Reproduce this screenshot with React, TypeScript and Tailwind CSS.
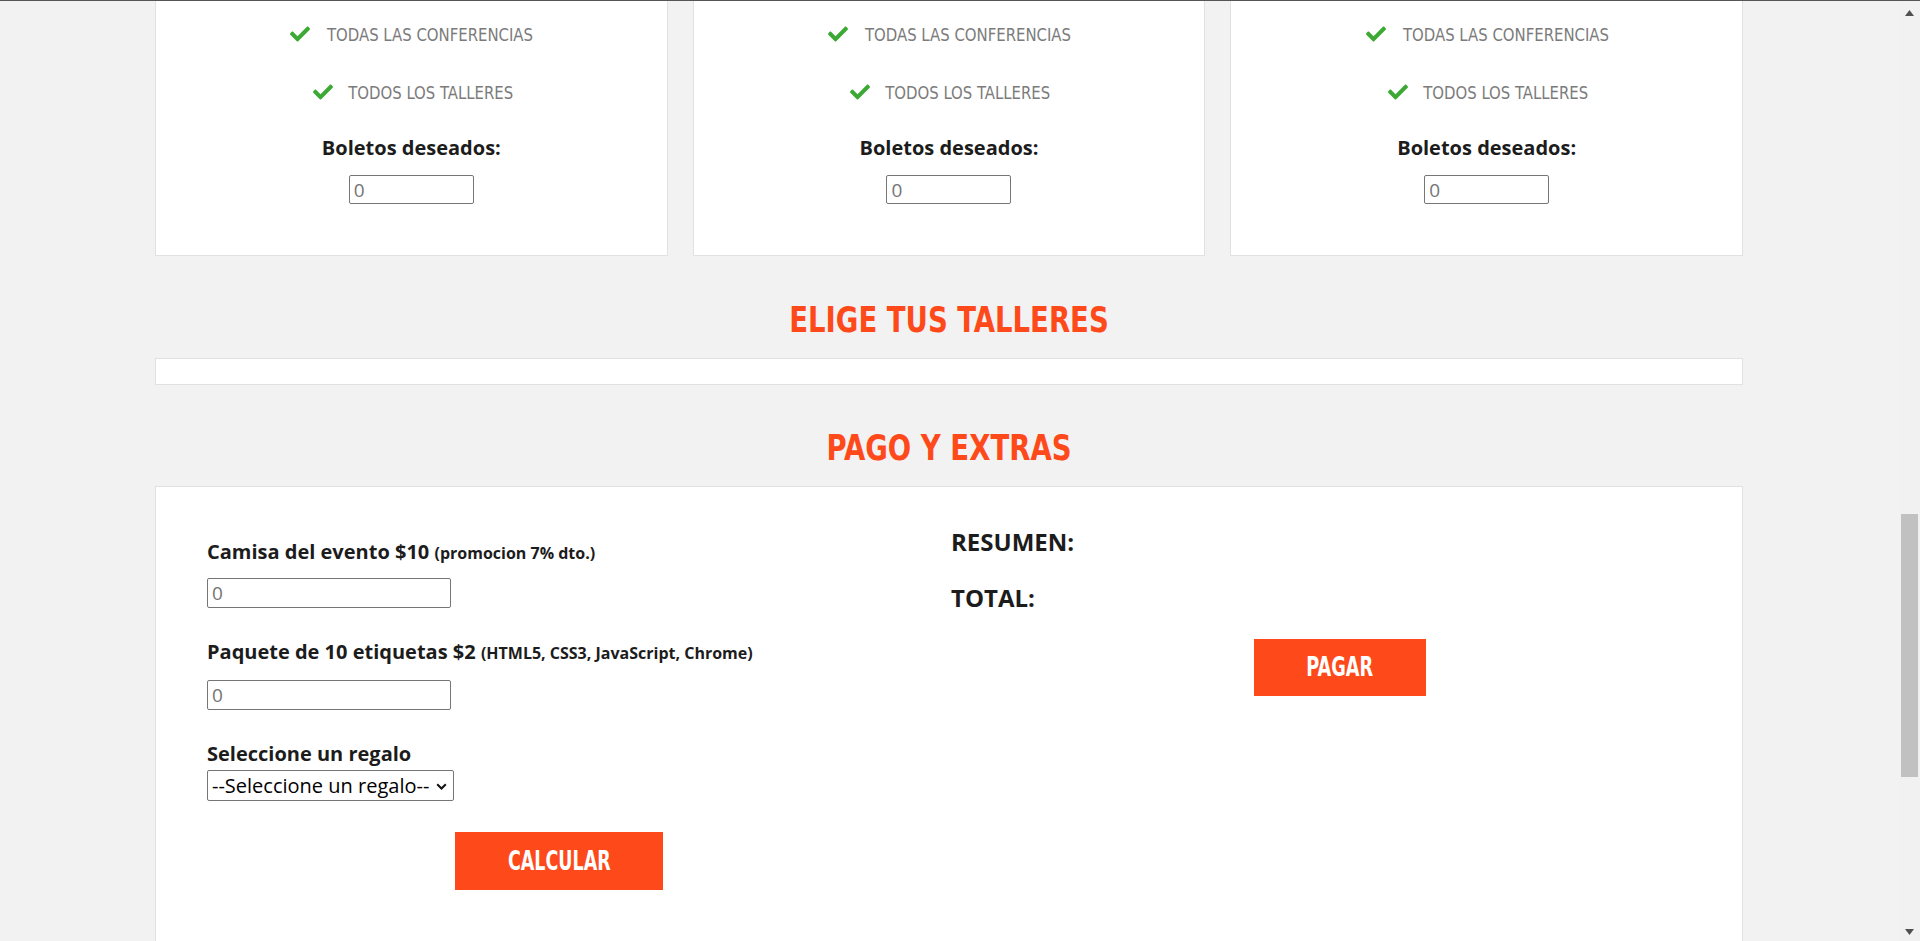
import React from "react";
import { FaCheck } from "react-icons/fa";

const narrow = { fontFamily: '"Liberation Sans Narrow", "DejaVu Sans Condensed", "Liberation Sans", sans-serif' };
const open = { fontFamily: '"Open Sans", "Liberation Sans", sans-serif' };

function Card() {
  return (
    <div className="bg-white border-x border-b border-[#e1e1e1] pt-[4px] pb-[51px] flex flex-col items-center">
      <div className="h-[58px] flex items-center justify-center gap-[6px] pl-[8px]">
        <FaCheck className="text-[#3da935] w-[24px] h-[20px]" />
        <span className="inline-block text-[18px] text-[#7b7b7b] scale-x-[0.92]" style={narrow}>TODAS LAS CONFERENCIAS</span>
      </div>
      <div className="h-[58px] flex items-center justify-center gap-[6px] pl-[8px]">
        <FaCheck className="text-[#3da935] w-[24px] h-[20px]" />
        <span className="inline-block text-[18px] text-[#7b7b7b] scale-x-[0.92]" style={narrow}>TODOS LOS TALLERES</span>
      </div>
      <div className="h-[30px] leading-[30px] mt-[12px] text-[20px] font-bold text-[#1c1c1c]" style={open}>Boletos deseados:</div>
      <input
        type="text"
        placeholder="0"
        className="mt-[12px] w-[125px] h-[29px] border border-[#767676] rounded-[2px] px-[4px] text-[19px] text-[#757575] placeholder:text-[#757575] bg-white"
        style={open}
      />
    </div>
  );
}

function Heading({ children }: { children: React.ReactNode }) {
  return (
    <h2 className="h-[40px] leading-[40px] text-center text-[#fe4a1b] text-[36px] font-bold" style={narrow}>
      <span className="inline-block scale-x-[0.85]">{children}</span>
    </h2>
  );
}

export default function App() {
  return (
    <div className="w-[1920px] h-[941px] overflow-hidden bg-[#f2f2f2] border-t border-[#555] flex">
      <div className="w-[1899px] h-full">
        <div className="w-[1588px] ml-[155px]">
          <div className="grid grid-cols-3 gap-[25px]">
            <Card />
            <Card />
            <Card />
          </div>

          <div className="mt-[44px]">
            <Heading>ELIGE TUS TALLERES</Heading>
          </div>
          <div className="mt-[18px] h-[27px] bg-white border border-[#e1e1e1]"></div>

          <div className="mt-[43px]">
            <Heading>PAGO Y EXTRAS</Heading>
          </div>

          <div className="mt-[18px] h-[600px] bg-white border border-[#e1e1e1] pl-[51px] grid grid-cols-[744px_1fr]" style={open}>
            <div className="pt-[50px] flex flex-col items-start">
              <div className="h-[30px] leading-[30px] text-[20px] font-bold text-[#1c1c1c]">
                Camisa del evento $10 <span className="text-[16px]">(promocion 7% dto.)</span>
              </div>
              <input
                type="text"
                placeholder="0"
                className="mt-[11px] w-[244px] h-[30px] border border-[#767676] rounded-[2px] px-[4px] text-[19px] text-[#757575] placeholder:text-[#757575] bg-white"
              />
              <div className="mt-[29px] h-[30px] leading-[30px] text-[20px] font-bold text-[#1c1c1c]">
                Paquete de 10 etiquetas $2 <span className="text-[16px]">(HTML5, CSS3, JavaScript, Chrome)</span>
              </div>
              <input
                type="text"
                placeholder="0"
                className="mt-[13px] w-[244px] h-[30px] border border-[#767676] rounded-[2px] px-[4px] text-[19px] text-[#757575] placeholder:text-[#757575] bg-white"
              />
              <div className="mt-[29px] h-[30px] leading-[30px] text-[20px] font-bold text-[#1c1c1c]">Seleccione un regalo</div>
              <div className="relative mt-[1px] w-[247px] h-[31px]">
                <select className="appearance-none w-full h-full border border-[#767676] rounded-[2px] pl-[4px] text-[20px] text-black bg-white leading-[29px]">
                  <option>--Seleccione un regalo--</option>
                </select>
                <svg className="absolute right-[7px] top-[13px] pointer-events-none" width="11" height="7" viewBox="0 0 11 7">
                  <path d="M1.2 1.2 L5.5 5.5 L9.8 1.2" fill="none" stroke="#111" strokeWidth="2" />
                </svg>
              </div>
              <button className="mt-[31px] ml-[248px] w-[208px] h-[58px] bg-[#fe4a1b] text-white text-[27px] font-bold" style={narrow}>
                <span className="inline-block scale-x-[0.72]">CALCULAR</span>
              </button>
            </div>
            <div className="pt-[40px] flex flex-col items-start">
              <div className="h-[30px] leading-[30px] text-[24px] font-bold text-[#1c1c1c]">RESUMEN:</div>
              <div className="mt-[26px] h-[30px] leading-[30px] text-[24px] font-bold text-[#1c1c1c]">TOTAL:</div>
              <button className="mt-[26px] ml-[303px] w-[172px] h-[57px] bg-[#fe4a1b] text-white text-[27px] font-bold" style={narrow}>
                <span className="inline-block scale-x-[0.73]">PAGAR</span>
              </button>
            </div>
          </div>
        </div>
      </div>

      <div className="w-[21px] h-full bg-[#f1f1f1] flex flex-col items-center relative">
        <svg className="absolute left-[6px] top-[9px]" width="9" height="6" viewBox="0 0 9 6">
          <path d="M4.5 0 L9 6 L0 6 Z" fill="#505050" />
        </svg>
        <div className="absolute left-[2px] top-[513px] w-[17px] h-[263px] bg-[#c1c1c1]"></div>
        <svg className="absolute left-[6px] top-[928px]" width="9" height="6" viewBox="0 0 9 6">
          <path d="M0 0 L9 0 L4.5 6 Z" fill="#505050" />
        </svg>
      </div>
    </div>
  );
}
